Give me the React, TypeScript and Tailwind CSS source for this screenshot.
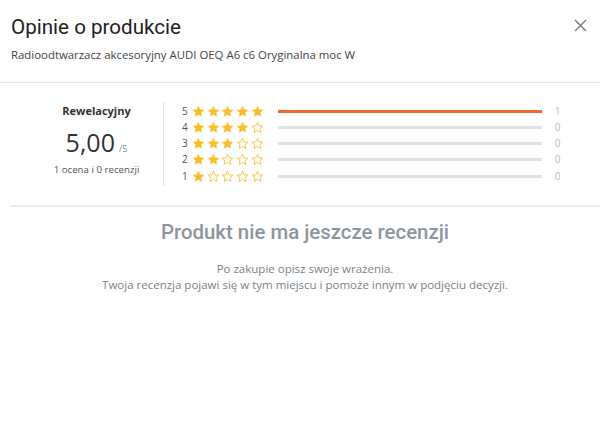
import React from "react";

const rows = [
	{ stars: 5, count: 1 },
	{ stars: 4, count: 0 },
	{ stars: 3, count: 0 },
	{ stars: 2, count: 0 },
	{ stars: 1, count: 0 },
];

const Star = ({ filled }: { filled: boolean }) => (
	<svg width="13" height="13" viewBox="0 0 24 24" className="block">
		<path
			d="M12 2.5l2.9 6.3 6.9.7-5.2 4.6 1.5 6.8L12 17.4l-6.1 3.5 1.5-6.8-5.2-4.6 6.9-.7z"
			fill={filled ? "#f8bd27" : "none"}
			stroke="#f8bd27"
			strokeWidth={filled ? 1 : 1.6}
			strokeLinejoin="round"
		/>
	</svg>
);

const App = () => {
	return (
		<div className="w-[600px] h-[421px] bg-white font-['Open_Sans',sans-serif] text-[#333]">
			{/* header */}
			<div className="flex items-start justify-between px-[11px] pt-[13px]">
				<h1 className="font-['Roboto',sans-serif] text-[20.6px] leading-[28px] text-[#222]">Opinie o produkcie</h1>
				<button className="mt-[6px] mr-[2px]">
					<svg width="13" height="13" viewBox="0 0 13 13">
						<path d="M1 1l11 11M12 1L1 12" stroke="#7a7a7a" strokeWidth="1.4" />
					</svg>
				</button>
			</div>
			<p className="px-[11px] pt-[6px] text-[11.4px] leading-[16px] text-[#444]">
				Radioodtwarzacz akcesoryjny AUDI OEQ A6 c6 Oryginalna moc W
			</p>
			<div className="mt-[19px] h-px bg-[#e3e3e3]" />

			{/* summary */}
			<div className="flex pl-[30px] pt-[19px]">
				<div className="w-[133px] flex flex-col items-center pt-[1px]">
					<div className="text-[11px] font-bold leading-[16px] text-[#333]">Rewelacyjny</div>
					<div className="mt-[7px] flex items-baseline">
						<span className="text-[25px] leading-[32px] text-[#333]">5,00</span>
						<span className="ml-[4px] text-[9px] text-[#888]">/5</span>
					</div>
					<div className="mt-[5px] text-[9.7px] leading-[14px] text-[#555]">1 ocena i 0 recenzji</div>
				</div>
				<div className="w-px h-[84px] bg-[#e3e3e3]" />
				<div className="flex flex-col pl-[18px] pt-[1px]">
					{rows.map((r) => (
						<div key={r.stars} className="flex items-center h-[16.25px]">
							<span className="w-[10px] text-[10px] text-[#555]">{r.stars}</span>
							<div className="flex gap-[1.7px]">
								{[1, 2, 3, 4, 5].map((i) => (
									<Star key={i} filled={i <= r.stars} />
								))}
							</div>
							<div className="ml-[14px] w-[264px] h-[3px] bg-[#e3e3e3]">
								{r.count > 0 && <div className="h-full w-full bg-[#f06a2c]" />}
							</div>
							<span className="ml-[13px] text-[10px] text-[#bbbbbb]">{r.count}</span>
						</div>
					))}
				</div>
			</div>

			<div className="ml-[10px] mt-[19px] h-[2px] bg-[#eeeeee]" />

			{/* empty state */}
			<div className="flex flex-col items-center pt-[11px] pl-[10px]">
				<h2 className="font-['Roboto',sans-serif] font-medium text-[20.4px] leading-[28px] text-[#8c969e]">
					Produkt nie ma jeszcze recenzji
				</h2>
				<p className="mt-[15px] text-center text-[11.5px] leading-[15.5px] text-[#7b8389]">
					Po zakupie opisz swoje wrażenia.
					<br />
					Twoja recenzja pojawi się w tym miejscu i pomoże innym w podjęciu decyzji.
				</p>
			</div>
		</div>
	);
};

export default App;
